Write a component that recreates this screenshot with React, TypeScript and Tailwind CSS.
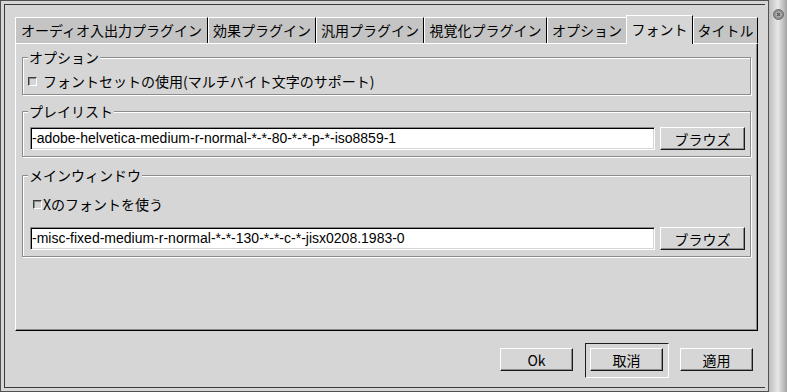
import type { ReactNode } from "react";

const tabs = [
  { label: "オーディオ入出力プラグイン", w: "w-[193px]" },
  { label: "効果プラグイン", w: "w-[108px]" },
  { label: "汎用プラグイン", w: "w-[108px]" },
  { label: "視覚化プラグイン", w: "w-[123px]" },
  { label: "オプション", w: "w-[79px]", noRight: true },
  { label: "フォント", w: "w-[67px]", active: true },
  { label: "タイトル", w: "w-[65px]" },
];

function Frame({ label, className, children }: { label: string; className: string; children: ReactNode }) {
  return (
    <div className={`border border-[#8c8c8c] shadow-[1px_1px_0_#fff,inset_1px_1px_0_#fff] ${className}`}>
      <div className="-mt-[8px] ml-[5px] h-[14px] w-fit bg-[#d6d6d6] px-[1px] leading-[14px]">{label}</div>
      {children}
    </div>
  );
}

function Check() {
  return (
    <span className="h-[9px] w-[9px] shrink-0 border border-t-[#3c3c3c] border-l-[#3c3c3c] border-b-white border-r-white bg-[#d6d6d6] shadow-[inset_1px_1px_0_#8c8c8c]" />
  );
}

function Btn({ children, className = "" }: { children: ReactNode; className?: string }) {
  return (
    <button
      className={`flex h-[23px] items-center justify-center border border-t-white border-l-white border-b-[#1a1a1a] border-r-[#1a1a1a] bg-[#d6d6d6] leading-[14px] shadow-[inset_-1px_-1px_0_#8c8c8c] ${className}`}
    >
      {children}
    </button>
  );
}

function Entry({ value }: { value: string }) {
  return (
    <div className="flex h-[23px] w-[625px] items-center overflow-hidden whitespace-nowrap border border-t-[#8c8c8c] border-l-[#8c8c8c] border-b-white border-r-white bg-white pl-[1px] font-['Liberation_Sans',sans-serif] text-[14px] shadow-[inset_1px_1px_0_#000,inset_-1px_-1px_0_#d6d6d6]">
      {value}
    </div>
  );
}

export default function App() {
  return (
    <div className="flex h-[392px] w-[787px] overflow-hidden bg-[#d6d6d6] font-['Noto_Sans_CJK_JP',sans-serif] text-[14px] text-black">
      <div className="h-full w-[769px] border border-[#505050] p-[3px]">
        <div className="flex h-full flex-col border-t border-l border-b border-[#3a3a3a] pl-[10px] pt-[10px]">
          {/* Notebook */}
          <div className="w-[743px]">
            <div className="flex h-[28px] items-end">
              {tabs.map((t) =>
                t.active ? (
                  <div
                    key={t.label}
                    className={`relative z-10 -mb-[1px] flex h-[29px] items-center justify-center border-t border-l border-r border-t-white border-l-white border-r-black bg-[#d6d6d6] pb-[2px] ${t.w}`}
                  >
                    {t.label}
                  </div>
                ) : (
                  <div
                    key={t.label}
                    className={`flex h-[26px] items-center justify-center border-t border-l border-t-white border-l-white bg-[#c4c4c4] ${
                      t.noRight ? "" : "border-r border-r-black"
                    } ${t.w}`}
                  >
                    {t.label}
                  </div>
                )
              )}
            </div>
            <div className="h-[288px] border border-t-white border-l-white border-r-black border-b-black px-[6px] pt-[13px] shadow-[inset_-1px_-1px_0_#8c8c8c]">
              <Frame label="オプション" className="pb-[3px]">
                <div className="mt-[7px] ml-[5px] flex h-[20px] items-center gap-[6px]">
                  <Check />
                  <span className="leading-[14px]">フォントセットの使用(マルチバイト文字のサポート)</span>
                </div>
              </Frame>

              <Frame label="プレイリスト" className="mt-[16px] pb-[6px]">
                <div className="mt-[9px] ml-[7px] flex gap-[5px]">
                  <Entry value="-adobe-helvetica-medium-r-normal-*-*-80-*-*-p-*-iso8859-1" />
                  <Btn className="w-[85px]">ブラウズ</Btn>
                </div>
              </Frame>

              <Frame label="メインウィンドウ" className="mt-[18px] pb-[6px]">
                <div className="mt-[12px] ml-[10px] flex h-[20px] items-center gap-[1px]">
                  <Check />
                  <span className="leading-[14px]">Xのフォントを使う</span>
                </div>
                <div className="mt-[13px] ml-[7px] flex gap-[5px]">
                  <Entry value="-misc-fixed-medium-r-normal-*-*-130-*-*-c-*-jisx0208.1983-0" />
                  <Btn className="w-[85px]">ブラウズ</Btn>
                </div>
              </Frame>
            </div>
          </div>

          {/* Dialog buttons */}
          <div className="mt-[12px] flex items-start justify-end pr-[12px]">
            <Btn className="mt-[5px] w-[73px]">Ok</Btn>
            <div className="ml-[12px] h-[35px] w-[84px] border border-t-[#1e1e1e] border-l-[#1e1e1e] border-b-white border-r-white pl-[4px] pt-[4px]">
              <Btn className="w-[73px]">取消</Btn>
            </div>
            <Btn className="ml-[11px] mt-[5px] w-[73px]">適用</Btn>
          </div>
        </div>
      </div>

      {/* Window frame strip */}
      <div className="flex h-full w-[18px] justify-center bg-gradient-to-r from-[#bdbdbd] via-[#e8e8e8] to-[#a4a4a4] pt-[9px]">
        <svg width="11" height="11" viewBox="0 0 11 11">
          <circle cx="5.5" cy="5.5" r="5" fill="#8e8e8e" stroke="#6a6a6a" strokeWidth="1" />
          <circle cx="5.5" cy="5.5" r="3" fill="#b4b4b4" />
          <path d="M4 4l3 3M7 4l-3 3" stroke="#5a5a5a" strokeWidth="1.2" />
        </svg>
      </div>
    </div>
  );
}
